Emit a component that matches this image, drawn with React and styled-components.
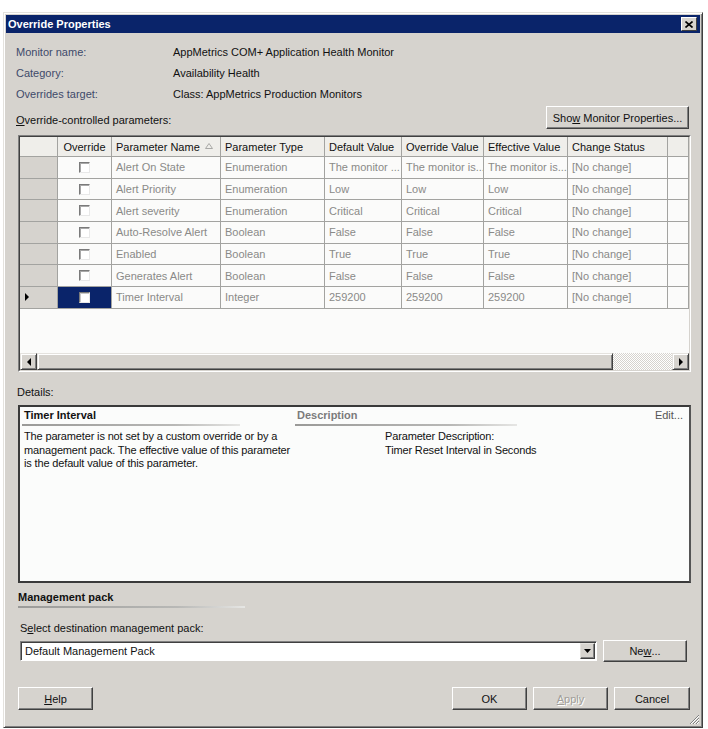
import React from "react";
import styled, { createGlobalStyle } from "styled-components";

const GlobalStyle = createGlobalStyle`
  html, body {
    margin: 0;
    padding: 0;
    background: #ffffff;
  }
  body {
    font-family: "Liberation Sans", Arial, sans-serif;
    font-size: 11px;
    color: #111;
  }
`;

const COLS = "38px 54px 109px 104px 77px 82px 84px 100px 21px";

const Page = styled.div`
  padding: 12px 5px 0 3px;
`;

const Window = styled.div`
  width: 700px;
  height: 716px;
  box-sizing: border-box;
  background: #d6d3ce;
  border: 1px solid;
  border-color: #e4e2de #404040 #404040 #e4e2de;
  box-shadow: inset 1px 1px 0 #ffffff, inset -1px -1px 0 #808080;
  padding: 2px;
  display: flex;
  flex-direction: column;
`;

const TitleBar = styled.div`
  height: 18px;
  background: #0a246a;
  color: #fff;
  font-weight: bold;
  display: flex;
  align-items: center;
  justify-content: space-between;
  padding: 0 3px 0 2px;
`;

const CloseBtn = styled.div`
  width: 14px;
  height: 12px;
  background: #d6d3ce;
  border: 1px solid;
  border-color: #fff #404040 #404040 #fff;
  display: flex;
  align-items: center;
  justify-content: center;
`;

const Content = styled.div`
  flex: 1;
  padding: 0 9px 0 12px;
  display: flex;
  flex-direction: column;
`;

const InfoGrid = styled.div`
  margin: 8px 0 0 -2px;
  display: grid;
  grid-template-columns: 157px 1fr;
  grid-auto-rows: 21px;
  align-items: center;
`;

const InfoLabel = styled.div`
  color: #3e4a6a;
`;

const ParamsHeader = styled.div`
  margin-top: 2px;
  display: flex;
  justify-content: space-between;
  align-items: flex-end;
`;

const SectionLabel = styled.div`
  margin-left: ${(p) => p.$indent || 0}px;
  margin-top: ${(p) => p.$mt || 0}px;
  padding-bottom: ${(p) => p.$pb || 0}px;
  line-height: 13px;
`;

const Button = styled.div`
  width: ${(p) => p.$w}px;
  height: ${(p) => p.$h || 23}px;
  box-sizing: border-box;
  background: #d6d3ce;
  border: 1px solid;
  border-color: #ffffff #404040 #404040 #ffffff;
  box-shadow: inset -1px -1px 0 #808080;
  display: flex;
  align-items: center;
  justify-content: center;
  color: ${(p) => (p.$disabled ? "#a09d98" : "#111")};
  text-shadow: ${(p) => (p.$disabled ? "1px 1px 0 #fff" : "none")};
  margin-right: ${(p) => p.$mr || 0}px;
`;

const Grid = styled.div`
  margin-top: 6px;
  height: 237px;
  box-sizing: border-box;
  border: 1px solid;
  border-color: #808080 #ffffff #ffffff #808080;
  display: flex;
  flex-direction: column;
`;

const GridInner = styled.div`
  flex: 1;
  border: 1px solid;
  border-color: #404040 #d6d3ce #d6d3ce #404040;
  background: #fbfbfa;
  display: flex;
  flex-direction: column;
  overflow: hidden;
`;

const Rows = styled.div`
  flex: 1;
`;

const Row = styled.div`
  display: grid;
  grid-template-columns: ${COLS};
  height: ${(p) => (p.$header ? 20 : 21.7)}px;
`;

const Cell = styled.div`
  box-sizing: border-box;
  border-right: 1px solid #a3a3a0;
  border-bottom: 1px solid #a3a3a0;
  background: ${(p) =>
    p.$selected ? "#0a246a" : p.$head ? "#efeeea" : p.$rowHead ? "#d6d3ce" : "#fbfbfa"};
  color: ${(p) => (p.$head ? "#111" : "#8a8a88")};
  padding-left: ${(p) => (p.$center ? 0 : 4)}px;
  display: flex;
  align-items: center;
  justify-content: ${(p) => (p.$center ? "center" : "flex-start")};
  white-space: nowrap;
  overflow: hidden;
  position: relative;
`;

const Check = styled.div`
  width: 11px;
  height: 11px;
  box-sizing: border-box;
  background: #fff;
  border: 1px solid;
  border-color: #7a7a7a #e8e8e8 #e8e8e8 #7a7a7a;
  box-shadow: inset 1px 1px 0 ${(p) => (p.$selected ? "#c8c8c8" : "#a8a8a8")};
`;

const SortMark = styled.svg`
  position: absolute;
  right: 7px;
  top: 6px;
`;

const ScrollBar = styled.div`
  height: 17px;
  display: flex;
  background-color: #eeede9;
  background-image: repeating-conic-gradient(#d6d3ce 0 25%, #ffffff 0 50%);
  background-size: 2px 2px;
`;

const ScrollBtn = styled.div`
  width: ${(p) => p.$w || 17}px;
  height: 17px;
  box-sizing: border-box;
  background: #d6d3ce;
  border: 1px solid;
  border-color: #e4e2de #404040 #404040 #e4e2de;
  box-shadow: inset 1px 1px 0 #ffffff, inset -1px -1px 0 #808080;
  display: flex;
  align-items: center;
  justify-content: center;
`;

const ScrollTrack = styled.div`
  flex: 1;
`;

const DetailsBox = styled.div`
  margin-top: 6px;
  height: 178px;
  box-sizing: border-box;
  border: 2px solid;
  border-color: #3a3a3a #555 #3a3a3a #3a3a3a;
  background: #fbfcfb;
  padding: 2px 6px 0 2px;
  display: grid;
  grid-template-columns: 273px 1fr;
  position: relative;
`;

const Heading = styled.div`
  font-weight: bold;
  color: ${(p) => (p.$muted ? "#7b7b7b" : "#111")};
  line-height: 13px;
  padding-left: 2px;
`;

const Rule = styled.div`
  width: ${(p) => p.$w}px;
  height: 2px;
  margin-top: 2px;
  background: linear-gradient(to right, #9a9a98, #b8b8b6 70%, #e6e6e4);
`;

const BodyText = styled.div`
  margin-top: 4px;
  padding-left: ${(p) => p.$indent || 2}px;
  line-height: 13.5px;
  letter-spacing: -0.15px;
`;

const EditLink = styled.div`
  position: absolute;
  right: 6px;
  top: 2px;
  color: #555;
`;

const MgmtHeading = styled.div`
  margin-top: 8px;
  font-weight: bold;
  line-height: 13px;
`;

const ComboRow = styled.div`
  margin-top: 5px;
  display: flex;
  align-items: center;
  gap: 6px;
`;

const Combo = styled.div`
  margin-left: 2px;
  width: 577px;
  height: 20px;
  box-sizing: border-box;
  background: #fff;
  border: 1px solid;
  border-color: #808080 #ffffff #ffffff #808080;
  box-shadow: inset 1px 1px 0 #404040;
  display: flex;
  align-items: center;
  padding: 0 1px 0 4px;
`;

const ComboText = styled.div`
  flex: 1;
`;

const ComboArrow = styled.div`
  width: 15px;
  height: 16px;
  box-sizing: border-box;
  background: #d6d3ce;
  border: 1px solid;
  border-color: #e4e2de #404040 #404040 #e4e2de;
  box-shadow: inset -1px -1px 0 #808080;
  display: flex;
  align-items: center;
  justify-content: center;
`;

const Footer = styled.div`
  margin-top: 25px;
  display: flex;
  align-items: center;
`;

const Spacer = styled.div`
  flex: 1;
`;

const Grip = styled.svg`
  position: absolute;
  right: 3px;
  bottom: 3px;
`;

const WindowWrap = styled.div`
  position: relative;
  width: 700px;
`;

const rows = [
  ["Alert On State", "Enumeration", "The monitor ...", "The monitor is...", "The monitor is..."],
  ["Alert Priority", "Enumeration", "Low", "Low", "Low"],
  ["Alert severity", "Enumeration", "Critical", "Critical", "Critical"],
  ["Auto-Resolve Alert", "Boolean", "False", "False", "False"],
  ["Enabled", "Boolean", "True", "True", "True"],
  ["Generates Alert", "Boolean", "False", "False", "False"],
  ["Timer Interval", "Integer", "259200", "259200", "259200"],
];

const Arrow = ({ dir }) => {
  const pts = {
    left: "5,0 5,8 1,4",
    right: "1,0 1,8 5,4",
    down: "0,1 7,1 3.5,5",
  }[dir];
  const size = dir === "down" ? [7, 6] : [6, 8];
  return (
    <svg width={size[0]} height={size[1]} viewBox={`0 0 ${size[0]} ${size[1]}`}>
      <polygon points={pts} fill="#000" />
    </svg>
  );
};

export default function App() {
  return (
    <Page>
      <GlobalStyle />
      <WindowWrap>
        <Window>
          <TitleBar>
            <span>Override Properties</span>
            <CloseBtn>
              <svg width="8" height="7" viewBox="0 0 8 7">
                <path d="M0.5 0.5 L7.5 6.5 M7.5 0.5 L0.5 6.5" stroke="#000" strokeWidth="1.6" />
              </svg>
            </CloseBtn>
          </TitleBar>
          <Content>
            <InfoGrid>
              <InfoLabel>Monitor name:</InfoLabel>
              <div>AppMetrics COM+ Application Health Monitor</div>
              <InfoLabel>Category:</InfoLabel>
              <div>Availability Health</div>
              <InfoLabel>Overrides target:</InfoLabel>
              <div>Class: AppMetrics Production Monitors</div>
            </InfoGrid>

            <ParamsHeader>
              <SectionLabel $indent={-2} $pb={2}>
                <u>O</u>verride-controlled parameters:
              </SectionLabel>
              <Button $w={143} $mr={2}>
                Sho<u>w</u>&nbsp;Monitor Properties...
              </Button>
            </ParamsHeader>

            <Grid>
              <GridInner>
                <Rows>
                  <Row $header>
                    <Cell $head />
                    <Cell $head $center>Override</Cell>
                    <Cell $head>
                      Parameter Name
                      <SortMark width="8" height="6" viewBox="0 0 8 6">
                        <polygon points="4,0.5 7.5,5.5 0.5,5.5" fill="none" stroke="#a8a8a6" />
                      </SortMark>
                    </Cell>
                    <Cell $head>Parameter Type</Cell>
                    <Cell $head>Default Value</Cell>
                    <Cell $head>Override Value</Cell>
                    <Cell $head>Effective Value</Cell>
                    <Cell $head>Change Status</Cell>
                    <Cell $head />
                  </Row>
                  {rows.map((r, i) => {
                    const selected = i === rows.length - 1;
                    return (
                      <Row key={r[0]}>
                        <Cell $rowHead>{selected && <Arrow dir="right" />}</Cell>
                        <Cell $center $selected={selected}>
                          <Check $selected={selected} />
                        </Cell>
                        {r.map((v) => (
                          <Cell key={v}>{v}</Cell>
                        ))}
                        <Cell>[No change]</Cell>
                        <Cell />
                      </Row>
                    );
                  })}
                </Rows>
                <ScrollBar>
                  <ScrollBtn>
                    <Arrow dir="left" />
                  </ScrollBtn>
                  <ScrollBtn $w={576} />
                  <ScrollTrack />
                  <ScrollBtn>
                    <Arrow dir="right" />
                  </ScrollBtn>
                </ScrollBar>
              </GridInner>
            </Grid>

            <SectionLabel $indent={-1} $mt={14}>
              Details:
            </SectionLabel>

            <DetailsBox>
              <div>
                <Heading>Timer Interval</Heading>
                <Rule $w={218} />
                <BodyText>
                  The parameter is not set by a custom override or by a
                  <br />
                  management pack. The effective value of this parameter
                  <br />
                  is the default value of this parameter.
                </BodyText>
              </div>
              <div>
                <Heading $muted>Description</Heading>
                <Rule $w={222} />
                <BodyText $indent={90}>
                  Parameter Description:
                  <br />
                  Timer Reset Interval in Seconds
                </BodyText>
              </div>
              <EditLink>Edit...</EditLink>
            </DetailsBox>

            <MgmtHeading>Management pack</MgmtHeading>
            <Rule $w={227} />

            <SectionLabel $indent={2} $mt={14}>
              S<u>e</u>lect destination management pack:
            </SectionLabel>
            <ComboRow>
              <Combo>
                <ComboText>Default Management Pack</ComboText>
                <ComboArrow>
                  <Arrow dir="down" />
                </ComboArrow>
              </Combo>
              <Button $w={84} $h={22} $mr={4}>
                Ne<u>w</u>...
              </Button>
            </ComboRow>

            <Footer>
              <Button $w={75}>
                <u>H</u>elp
              </Button>
              <Spacer />
              <Button $w={75} $mr={6}>OK</Button>
              <Button $w={75} $mr={6} $disabled>
                <u>A</u>pply
              </Button>
              <Button $w={76} $mr={1}>Cancel</Button>
            </Footer>
          </Content>
        </Window>
        <Grip width="11" height="11" viewBox="0 0 11 11">
          <path d="M10 1 L1 10 M10 4 L4 10 M10 7 L7 10" stroke="#808080" strokeWidth="1" />
          <path d="M10 2 L2 10 M10 5 L5 10 M10 8 L8 10" stroke="#ffffff" strokeWidth="1" />
        </Grip>
      </WindowWrap>
    </Page>
  );
}
